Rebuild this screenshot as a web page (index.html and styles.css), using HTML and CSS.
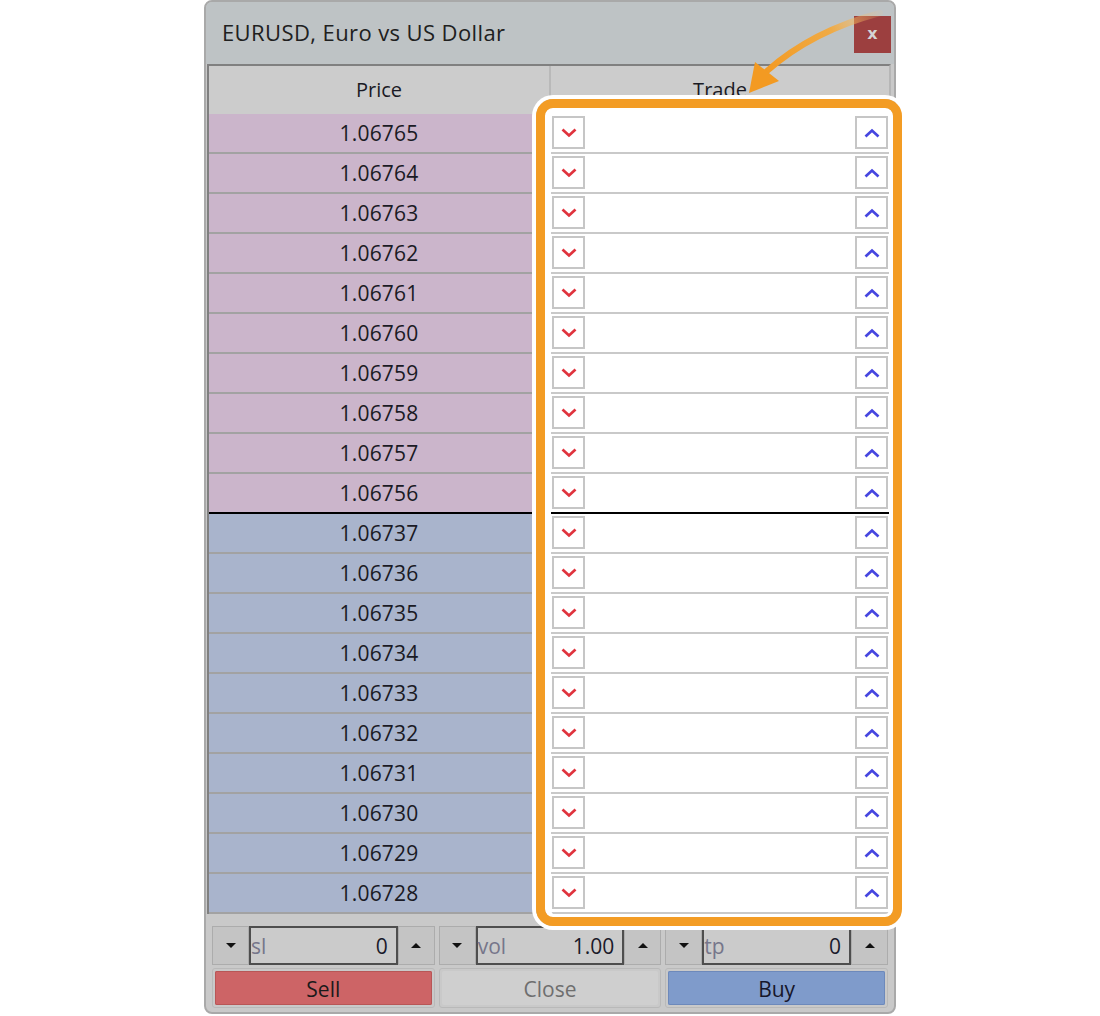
FILE: index.html
```html
<!DOCTYPE html>
<html>
<head>
<meta charset="utf-8">
<link rel="stylesheet" href="styles.css">
</head>
<body>
<div class="stage">
  <div class="window">
    <div class="titlebar">
      <span class="title">EURUSD, Euro vs US Dollar</span>
      <span class="close">x</span>
    </div>
    <div class="grid">
      <div class="row head">
        <div class="pc">Price</div><div class="sep"></div><div class="tc">Trade</div>
      </div>
      <div class="row sell"><div class="pc">1.06765</div><div class="sep"></div><div class="tc"><span class="b"><svg width="16" height="10" viewBox="0 0 16 10"><path d="M1.5 1.5 L8 7.5 L14.5 1.5" class="dn"/></svg></span><span class="b"><svg width="16" height="10" viewBox="0 0 16 10"><path d="M1.5 8.5 L8 2.5 L14.5 8.5" class="up"/></svg></span></div></div>
      <div class="row sell"><div class="pc">1.06764</div><div class="sep"></div><div class="tc"><span class="b"><svg width="16" height="10" viewBox="0 0 16 10"><path d="M1.5 1.5 L8 7.5 L14.5 1.5" class="dn"/></svg></span><span class="b"><svg width="16" height="10" viewBox="0 0 16 10"><path d="M1.5 8.5 L8 2.5 L14.5 8.5" class="up"/></svg></span></div></div>
      <div class="row sell"><div class="pc">1.06763</div><div class="sep"></div><div class="tc"><span class="b"><svg width="16" height="10" viewBox="0 0 16 10"><path d="M1.5 1.5 L8 7.5 L14.5 1.5" class="dn"/></svg></span><span class="b"><svg width="16" height="10" viewBox="0 0 16 10"><path d="M1.5 8.5 L8 2.5 L14.5 8.5" class="up"/></svg></span></div></div>
      <div class="row sell"><div class="pc">1.06762</div><div class="sep"></div><div class="tc"><span class="b"><svg width="16" height="10" viewBox="0 0 16 10"><path d="M1.5 1.5 L8 7.5 L14.5 1.5" class="dn"/></svg></span><span class="b"><svg width="16" height="10" viewBox="0 0 16 10"><path d="M1.5 8.5 L8 2.5 L14.5 8.5" class="up"/></svg></span></div></div>
      <div class="row sell"><div class="pc">1.06761</div><div class="sep"></div><div class="tc"><span class="b"><svg width="16" height="10" viewBox="0 0 16 10"><path d="M1.5 1.5 L8 7.5 L14.5 1.5" class="dn"/></svg></span><span class="b"><svg width="16" height="10" viewBox="0 0 16 10"><path d="M1.5 8.5 L8 2.5 L14.5 8.5" class="up"/></svg></span></div></div>
      <div class="row sell"><div class="pc">1.06760</div><div class="sep"></div><div class="tc"><span class="b"><svg width="16" height="10" viewBox="0 0 16 10"><path d="M1.5 1.5 L8 7.5 L14.5 1.5" class="dn"/></svg></span><span class="b"><svg width="16" height="10" viewBox="0 0 16 10"><path d="M1.5 8.5 L8 2.5 L14.5 8.5" class="up"/></svg></span></div></div>
      <div class="row sell"><div class="pc">1.06759</div><div class="sep"></div><div class="tc"><span class="b"><svg width="16" height="10" viewBox="0 0 16 10"><path d="M1.5 1.5 L8 7.5 L14.5 1.5" class="dn"/></svg></span><span class="b"><svg width="16" height="10" viewBox="0 0 16 10"><path d="M1.5 8.5 L8 2.5 L14.5 8.5" class="up"/></svg></span></div></div>
      <div class="row sell"><div class="pc">1.06758</div><div class="sep"></div><div class="tc"><span class="b"><svg width="16" height="10" viewBox="0 0 16 10"><path d="M1.5 1.5 L8 7.5 L14.5 1.5" class="dn"/></svg></span><span class="b"><svg width="16" height="10" viewBox="0 0 16 10"><path d="M1.5 8.5 L8 2.5 L14.5 8.5" class="up"/></svg></span></div></div>
      <div class="row sell"><div class="pc">1.06757</div><div class="sep"></div><div class="tc"><span class="b"><svg width="16" height="10" viewBox="0 0 16 10"><path d="M1.5 1.5 L8 7.5 L14.5 1.5" class="dn"/></svg></span><span class="b"><svg width="16" height="10" viewBox="0 0 16 10"><path d="M1.5 8.5 L8 2.5 L14.5 8.5" class="up"/></svg></span></div></div>
      <div class="row sell last"><div class="pc">1.06756</div><div class="sep"></div><div class="tc"><span class="b"><svg width="16" height="10" viewBox="0 0 16 10"><path d="M1.5 1.5 L8 7.5 L14.5 1.5" class="dn"/></svg></span><span class="b"><svg width="16" height="10" viewBox="0 0 16 10"><path d="M1.5 8.5 L8 2.5 L14.5 8.5" class="up"/></svg></span></div></div>
      <div class="row buy"><div class="pc">1.06737</div><div class="sep"></div><div class="tc"><span class="b"><svg width="16" height="10" viewBox="0 0 16 10"><path d="M1.5 1.5 L8 7.5 L14.5 1.5" class="dn"/></svg></span><span class="b"><svg width="16" height="10" viewBox="0 0 16 10"><path d="M1.5 8.5 L8 2.5 L14.5 8.5" class="up"/></svg></span></div></div>
      <div class="row buy"><div class="pc">1.06736</div><div class="sep"></div><div class="tc"><span class="b"><svg width="16" height="10" viewBox="0 0 16 10"><path d="M1.5 1.5 L8 7.5 L14.5 1.5" class="dn"/></svg></span><span class="b"><svg width="16" height="10" viewBox="0 0 16 10"><path d="M1.5 8.5 L8 2.5 L14.5 8.5" class="up"/></svg></span></div></div>
      <div class="row buy"><div class="pc">1.06735</div><div class="sep"></div><div class="tc"><span class="b"><svg width="16" height="10" viewBox="0 0 16 10"><path d="M1.5 1.5 L8 7.5 L14.5 1.5" class="dn"/></svg></span><span class="b"><svg width="16" height="10" viewBox="0 0 16 10"><path d="M1.5 8.5 L8 2.5 L14.5 8.5" class="up"/></svg></span></div></div>
      <div class="row buy"><div class="pc">1.06734</div><div class="sep"></div><div class="tc"><span class="b"><svg width="16" height="10" viewBox="0 0 16 10"><path d="M1.5 1.5 L8 7.5 L14.5 1.5" class="dn"/></svg></span><span class="b"><svg width="16" height="10" viewBox="0 0 16 10"><path d="M1.5 8.5 L8 2.5 L14.5 8.5" class="up"/></svg></span></div></div>
      <div class="row buy"><div class="pc">1.06733</div><div class="sep"></div><div class="tc"><span class="b"><svg width="16" height="10" viewBox="0 0 16 10"><path d="M1.5 1.5 L8 7.5 L14.5 1.5" class="dn"/></svg></span><span class="b"><svg width="16" height="10" viewBox="0 0 16 10"><path d="M1.5 8.5 L8 2.5 L14.5 8.5" class="up"/></svg></span></div></div>
      <div class="row buy"><div class="pc">1.06732</div><div class="sep"></div><div class="tc"><span class="b"><svg width="16" height="10" viewBox="0 0 16 10"><path d="M1.5 1.5 L8 7.5 L14.5 1.5" class="dn"/></svg></span><span class="b"><svg width="16" height="10" viewBox="0 0 16 10"><path d="M1.5 8.5 L8 2.5 L14.5 8.5" class="up"/></svg></span></div></div>
      <div class="row buy"><div class="pc">1.06731</div><div class="sep"></div><div class="tc"><span class="b"><svg width="16" height="10" viewBox="0 0 16 10"><path d="M1.5 1.5 L8 7.5 L14.5 1.5" class="dn"/></svg></span><span class="b"><svg width="16" height="10" viewBox="0 0 16 10"><path d="M1.5 8.5 L8 2.5 L14.5 8.5" class="up"/></svg></span></div></div>
      <div class="row buy"><div class="pc">1.06730</div><div class="sep"></div><div class="tc"><span class="b"><svg width="16" height="10" viewBox="0 0 16 10"><path d="M1.5 1.5 L8 7.5 L14.5 1.5" class="dn"/></svg></span><span class="b"><svg width="16" height="10" viewBox="0 0 16 10"><path d="M1.5 8.5 L8 2.5 L14.5 8.5" class="up"/></svg></span></div></div>
      <div class="row buy"><div class="pc">1.06729</div><div class="sep"></div><div class="tc"><span class="b"><svg width="16" height="10" viewBox="0 0 16 10"><path d="M1.5 1.5 L8 7.5 L14.5 1.5" class="dn"/></svg></span><span class="b"><svg width="16" height="10" viewBox="0 0 16 10"><path d="M1.5 8.5 L8 2.5 L14.5 8.5" class="up"/></svg></span></div></div>
      <div class="row buy"><div class="pc">1.06728</div><div class="sep"></div><div class="tc"><span class="b"><svg width="16" height="10" viewBox="0 0 16 10"><path d="M1.5 1.5 L8 7.5 L14.5 1.5" class="dn"/></svg></span><span class="b"><svg width="16" height="10" viewBox="0 0 16 10"><path d="M1.5 8.5 L8 2.5 L14.5 8.5" class="up"/></svg></span></div></div>
    </div>
    <div class="bottom">
      <div class="spins">
        <div class="spin"><span class="sbtn"><i class="tri-dn"></i></span><span class="field"><span class="lbl">sl</span><span class="val">0</span></span><span class="sbtn"><i class="tri-up"></i></span></div>
        <div class="spin"><span class="sbtn"><i class="tri-dn"></i></span><span class="field"><span class="lbl">vol</span><span class="val">1.00</span></span><span class="sbtn"><i class="tri-up"></i></span></div>
        <div class="spin"><span class="sbtn"><i class="tri-dn"></i></span><span class="field"><span class="lbl">tp</span><span class="val">0</span></span><span class="sbtn"><i class="tri-up"></i></span></div>
      </div>
      <div class="actions">
        <div class="act sell-b"><span>Sell</span></div>
        <div class="act close-b"><span>Close</span></div>
        <div class="act buy-b"><span>Buy</span></div>
      </div>
    </div>
  </div>
  <div class="highlight"></div>
  <svg class="arrow" width="1100" height="120" viewBox="0 0 1100 120">
    <defs>
      <linearGradient id="ag" x1="880" y1="12" x2="766" y2="72" gradientUnits="userSpaceOnUse">
        <stop offset="0" stop-color="#f9c57a" stop-opacity="0.1"/>
        <stop offset="0.4" stop-color="#f5a838" stop-opacity="0.9"/>
        <stop offset="1" stop-color="#f39a22" stop-opacity="1"/>
      </linearGradient>
    </defs>
    <path d="M880 13 Q812 31 767 71" fill="none" stroke="url(#ag)" stroke-width="6" stroke-linecap="round"/>
    <polygon points="749,93 755,62 779,81" fill="#f39a22"/>
  </svg>
</div>
</body>
</html>
```
FILE: styles.css
```css
html, body {
  margin: 0;
  padding: 0;
  background: #ffffff;
}

.stage {
  position: relative;
  width: 1100px;
  height: 1016px;
  font-family: "Open Sans", "Noto Sans", sans-serif;
  color: #1a1a24;
}

.window {
  margin-left: 204px;
  width: 688px;
  height: 1010px;
  border: 2px solid #a9a9a9;
  border-radius: 8px;
  background: #c9c9c9;
  overflow: hidden;
}

.titlebar {
  height: 62px;
  background: #bec3c5;
  display: flex;
  justify-content: space-between;
  align-items: flex-start;
}

.title {
  margin-left: 16px;
  margin-top: 15px;
  font-size: 22px;
  letter-spacing: 0.4px;
  line-height: 30px;
  color: #202020;
}

.close {
  width: 37px;
  height: 37px;
  margin-top: 14px;
  margin-right: 3px;
  background: #9c3f3f;
  color: #d4d4d4;
  font-weight: bold;
  font-size: 16px;
  line-height: 35px;
  text-align: center;
  font-family: "DejaVu Sans", sans-serif;
}

.grid {
  margin-left: 1px;
  width: 680px;
  border-top: 2px solid #808080;
  border-left: 2px solid #808080;
  border-right: 2px solid #b6b6b6;
}

.row {
  display: flex;
  height: 40px;
}

.row .pc {
  width: 340px;
  height: 38px;
  border-bottom: 2px solid #a2a2a2;
  text-align: center;
  font-size: 21px;
  letter-spacing: 0.2px;
  line-height: 39px;
}

.row .sep {
  width: 2px;
  background: #a2a2a2;
}

.row .tc {
  width: 338px;
  height: 38px;
  border-bottom: 2px solid #c9c9c9;
  background: #ffffff;
  display: flex;
  justify-content: space-between;
  align-items: flex-start;
}

.row.head {
  height: 48px;
  background: #cccccc;
}

.row.head .pc,
.row.head .tc {
  height: 48px;
  border-bottom: none;
  line-height: 48px;
  background: #cccccc;
  font-size: 20px;
  letter-spacing: 0;
  text-align: center;
  display: block;
}

.row.head .sep {
  background: #b9b9b9;
}

.row.sell .pc {
  background: #cbb5cb;
}

.row.buy .pc {
  background: #a9b4cc;
}

.row.last .pc,
.row.last .tc {
  border-bottom-color: #000000;
}

.row.last .sep {
  background: #a2a2a2;
}

.b {
  width: 29px;
  height: 29px;
  margin: 2px 1px 0 1px;
  border: 2px solid #c6c6c6;
  display: flex;
  align-items: center;
  justify-content: center;
  background: #ffffff;
}

.b svg {
  display: block;
}

.dn {
  fill: none;
  stroke: #e0333d;
  stroke-width: 2.7;
}

.up {
  fill: none;
  stroke: #4646e0;
  stroke-width: 2.7;
}

.bottom {
  height: 98px;
  padding: 12px 6px 0 6px;
  box-sizing: border-box;
}

.spins {
  display: grid;
  grid-template-columns: repeat(3, 1fr);
  column-gap: 4px;
}

.spin {
  display: flex;
  height: 39px;
}

.sbtn {
  width: 37px;
  box-sizing: border-box;
  border: 1px solid #acacac;
  background: #c4c4c4;
  display: flex;
  align-items: center;
  justify-content: center;
}

.tri-dn {
  width: 0;
  height: 0;
  border-left: 5px solid transparent;
  border-right: 5px solid transparent;
  border-top: 5px solid #111111;
}

.tri-up {
  width: 0;
  height: 0;
  border-left: 5px solid transparent;
  border-right: 5px solid transparent;
  border-bottom: 5px solid #111111;
}

.field {
  flex: 1;
  box-sizing: border-box;
  border: 2px solid #4e4e4e;
  background: #cbcbcb;
  display: flex;
  justify-content: space-between;
  align-items: center;
  padding: 0 8px 0 0;
  font-size: 21px;
}

.lbl {
  color: #76768a;
}

.val {
  color: #1a1a2a;
}

.actions {
  margin-top: 3px;
  display: grid;
  grid-template-columns: repeat(3, 1fr);
  column-gap: 4px;
}

.act {
  height: 40px;
  box-sizing: border-box;
  border: 1px solid #b9b9b9;
  border-radius: 3px;
  padding: 2px;
}

.act span {
  display: block;
  height: 34px;
  border-radius: 2px;
  text-align: center;
  font-size: 21px;
  line-height: 36px;
}

.sell-b span {
  background: #cd6466;
  box-shadow: inset 0 0 0 1px #b85656;
  color: #1a1a1a;
}

.close-b span {
  background: #cfcfcf;
  color: #6e6e6e;
}

.buy-b span {
  background: #7f9bcb;
  box-shadow: inset 0 0 0 1px #6d89bb;
  color: #16162a;
}

.highlight {
  position: absolute;
  left: 536px;
  top: 99px;
  width: 348px;
  height: 809px;
  border: 9px solid #f39c24;
  border-radius: 17px;
  box-shadow: 0 0 0 4px #ffffff, inset 6px 0 0 #ffffff, inset -4px 0 0 #ffffff, inset 0 6px 0 #ffffff, inset 0 -3px 0 #ffffff;
}

.arrow {
  position: absolute;
  left: 0;
  top: 0;
}
```
